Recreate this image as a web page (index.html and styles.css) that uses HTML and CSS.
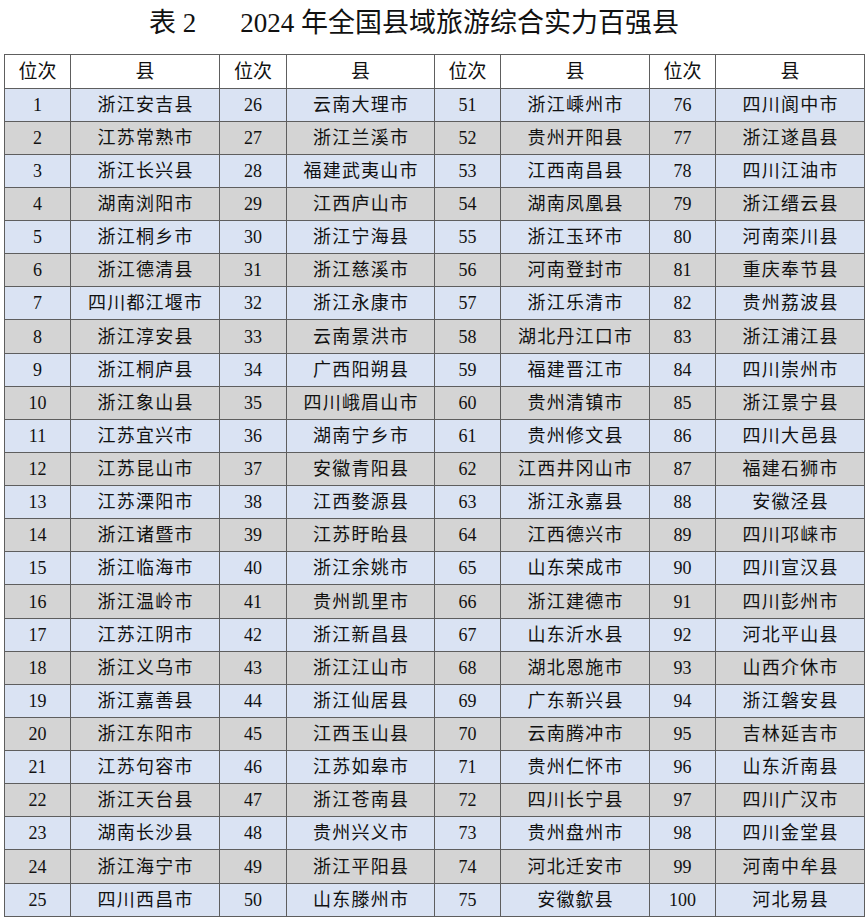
FILE: index.html
```html
<!DOCTYPE html>
<html lang="zh">
<head>
<meta charset="utf-8">
<title>2024年全国县域旅游综合实力百强县</title>
<link rel="stylesheet" href="styles.css">
</head>
<body>
<div class="title"><span class="t-label">表 2</span><span class="t-main">2024 年全国县域旅游综合实力百强县</span></div>
<table class="rank">
<colgroup>
<col class="c-no"><col class="c-name"><col class="c-no2"><col class="c-name2"><col class="c-no"><col class="c-name"><col class="c-no"><col class="c-name">
</colgroup>
<thead>
<tr><th>位次</th><th>县</th><th>位次</th><th>县</th><th>位次</th><th>县</th><th>位次</th><th>县</th></tr>
</thead>
<tbody>
<tr><td>1</td><td>浙江安吉县</td><td>26</td><td>云南大理市</td><td>51</td><td>浙江嵊州市</td><td>76</td><td>四川阆中市</td></tr>
<tr><td>2</td><td>江苏常熟市</td><td>27</td><td>浙江兰溪市</td><td>52</td><td>贵州开阳县</td><td>77</td><td>浙江遂昌县</td></tr>
<tr><td>3</td><td>浙江长兴县</td><td>28</td><td>福建武夷山市</td><td>53</td><td>江西南昌县</td><td>78</td><td>四川江油市</td></tr>
<tr><td>4</td><td>湖南浏阳市</td><td>29</td><td>江西庐山市</td><td>54</td><td>湖南凤凰县</td><td>79</td><td>浙江缙云县</td></tr>
<tr><td>5</td><td>浙江桐乡市</td><td>30</td><td>浙江宁海县</td><td>55</td><td>浙江玉环市</td><td>80</td><td>河南栾川县</td></tr>
<tr><td>6</td><td>浙江德清县</td><td>31</td><td>浙江慈溪市</td><td>56</td><td>河南登封市</td><td>81</td><td>重庆奉节县</td></tr>
<tr><td>7</td><td>四川都江堰市</td><td>32</td><td>浙江永康市</td><td>57</td><td>浙江乐清市</td><td>82</td><td>贵州荔波县</td></tr>
<tr><td>8</td><td>浙江淳安县</td><td>33</td><td>云南景洪市</td><td>58</td><td>湖北丹江口市</td><td>83</td><td>浙江浦江县</td></tr>
<tr><td>9</td><td>浙江桐庐县</td><td>34</td><td>广西阳朔县</td><td>59</td><td>福建晋江市</td><td>84</td><td>四川崇州市</td></tr>
<tr><td>10</td><td>浙江象山县</td><td>35</td><td>四川峨眉山市</td><td>60</td><td>贵州清镇市</td><td>85</td><td>浙江景宁县</td></tr>
<tr><td>11</td><td>江苏宜兴市</td><td>36</td><td>湖南宁乡市</td><td>61</td><td>贵州修文县</td><td>86</td><td>四川大邑县</td></tr>
<tr><td>12</td><td>江苏昆山市</td><td>37</td><td>安徽青阳县</td><td>62</td><td>江西井冈山市</td><td>87</td><td>福建石狮市</td></tr>
<tr><td>13</td><td>江苏溧阳市</td><td>38</td><td>江西婺源县</td><td>63</td><td>浙江永嘉县</td><td>88</td><td>安徽泾县</td></tr>
<tr><td>14</td><td>浙江诸暨市</td><td>39</td><td>江苏盱眙县</td><td>64</td><td>江西德兴市</td><td>89</td><td>四川邛崃市</td></tr>
<tr><td>15</td><td>浙江临海市</td><td>40</td><td>浙江余姚市</td><td>65</td><td>山东荣成市</td><td>90</td><td>四川宣汉县</td></tr>
<tr><td>16</td><td>浙江温岭市</td><td>41</td><td>贵州凯里市</td><td>66</td><td>浙江建德市</td><td>91</td><td>四川彭州市</td></tr>
<tr><td>17</td><td>江苏江阴市</td><td>42</td><td>浙江新昌县</td><td>67</td><td>山东沂水县</td><td>92</td><td>河北平山县</td></tr>
<tr><td>18</td><td>浙江义乌市</td><td>43</td><td>浙江江山市</td><td>68</td><td>湖北恩施市</td><td>93</td><td>山西介休市</td></tr>
<tr><td>19</td><td>浙江嘉善县</td><td>44</td><td>浙江仙居县</td><td>69</td><td>广东新兴县</td><td>94</td><td>浙江磐安县</td></tr>
<tr><td>20</td><td>浙江东阳市</td><td>45</td><td>江西玉山县</td><td>70</td><td>云南腾冲市</td><td>95</td><td>吉林延吉市</td></tr>
<tr><td>21</td><td>江苏句容市</td><td>46</td><td>江苏如皋市</td><td>71</td><td>贵州仁怀市</td><td>96</td><td>山东沂南县</td></tr>
<tr><td>22</td><td>浙江天台县</td><td>47</td><td>浙江苍南县</td><td>72</td><td>四川长宁县</td><td>97</td><td>四川广汉市</td></tr>
<tr><td>23</td><td>湖南长沙县</td><td>48</td><td>贵州兴义市</td><td>73</td><td>贵州盘州市</td><td>98</td><td>四川金堂县</td></tr>
<tr><td>24</td><td>浙江海宁市</td><td>49</td><td>浙江平阳县</td><td>74</td><td>河北迁安市</td><td>99</td><td>河南中牟县</td></tr>
<tr><td>25</td><td>四川西昌市</td><td>50</td><td>山东滕州市</td><td>75</td><td>安徽歙县</td><td>100</td><td>河北易县</td></tr>
</tbody>
</table>
</body>
</html>
```

FILE: styles.css
```css
html, body {
  margin: 0;
  padding: 0;
  background: #ffffff;
}

body {
  font-family: "Liberation Serif", "Noto Sans CJK SC", serif;
  color: #111111;
}

.title {
  height: 54px;
  display: flex;
  align-items: center;
  justify-content: center;
  padding-right: 40px;
  box-sizing: border-box;
  font-size: 27px;
  line-height: 1;
  padding-bottom: 8px;
}

.t-label {
  margin-right: 44px;
}

.t-main {
  letter-spacing: 0;
}

.rank {
  margin-left: 4px;
  border-collapse: collapse;
  table-layout: fixed;
  width: 861px;
  border: 1px solid #5e5e5e;
}

.c-no { width: 66px; }
.c-name { width: 149px; }
.c-no2 { width: 67px; }
.c-name2 { width: 148px; }

.rank th,
.rank td {
  border: 1px solid #5e5e5e;
  padding: 0;
  text-align: center;
  vertical-align: middle;
  font-size: 18px;
  font-weight: 400;
  line-height: 1;
  height: 32px;
}

.rank th {
  height: 33px;
  font-size: 19px;
  background: #ffffff;
}

.rank td:nth-child(even) {
  letter-spacing: 1.2px;
  text-indent: 1.2px;
}

.rank tbody tr:nth-child(odd) td {
  background: #dae3f3;
}

.rank tbody tr:nth-child(even) td {
  background: #d4d4d4;
}

.rank tbody tr:nth-child(8) td,
.rank tbody tr:nth-child(16) td,
.rank tbody tr:nth-child(24) td {
  height: 33px;
}
```
